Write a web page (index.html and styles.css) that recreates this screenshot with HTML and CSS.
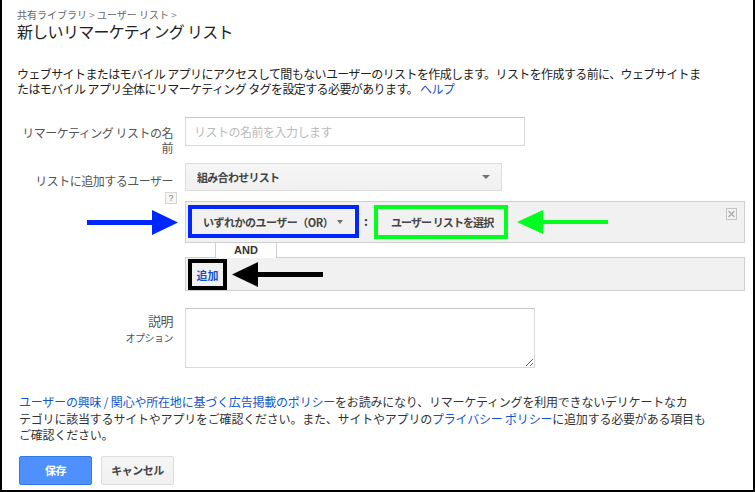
FILE: index.html
```html
<!DOCTYPE html>
<html lang="ja">
<head>
<meta charset="utf-8">
<title>新しいリマーケティング リスト</title>
<link rel="stylesheet" href="styles.css">
</head>
<body>
<div class="page">
  <div class="crumbs">共有ライブラリ <span class="sep">&gt;</span> ユーザー リスト <span class="sep">&gt;</span></div>
  <h1 class="title">新しいリマーケティング リスト</h1>
  <p class="intro">ウェブサイトまたはモバイル アプリにアクセスして間もないユーザーのリストを作成します。リストを作成する前に、ウェブサイトまたはモバイル アプリ全体にリマーケティング タグを設定する必要があります。 <a class="link" href="#">ヘルプ</a></p>

  <div class="form">
    <div class="row">
      <label class="lbl" for="name">リマーケティング リストの名前</label>
      <div class="field"><input id="name" class="text" type="text" placeholder="リストの名前を入力します"></div>
    </div>

    <div class="row">
      <div class="lbl lbl-select">リストに追加するユーザー<span class="help">?</span></div>
      <div class="field">
        <div class="select">組み合わせリスト<span class="caret"></span></div>
        <div class="combo">
          <div class="block first">
            <button class="chip mark-blue" type="button">いずれかのユーザー（OR）<span class="caret small"></span></button>
            <span class="colon">:</span>
            <button class="chip mark-green" type="button">ユーザー リストを選択</button>
            <span class="close">
              <svg width="11" height="12" viewBox="0 0 11 12"><rect x="0.5" y="0.5" width="10" height="11" fill="#f4f4f4" stroke="#c4c4c4"/><path d="M2.5 3 L8.5 9 M8.5 3 L2.5 9" stroke="#b0b0b0" stroke-width="1.6"/></svg>
            </span>
          </div>
          <div class="and">AND</div>
          <div class="block second"><a class="addlink mark-black" href="#">追加</a></div>
        </div>
      </div>
    </div>

    <div class="row">
      <div class="lbl lbl-desc"><div class="desc-main">説明</div><div class="opt">オプション</div></div>
      <div class="field"><textarea class="area"></textarea></div>
    </div>
  </div>

  <p class="policy"><a class="link" href="#">ユーザーの興味 / 関心や所在地に基づく広告掲載のポリシー</a>をお読みになり、リマーケティングを利用できないデリケートなカ<br>テゴリに該当するサイトやアプリをご確認ください。また、サイトやアプリの<a class="link" href="#">プライバシー ポリシー</a>に追加する必要がある項目もご確認ください。</p>

  <div class="actions">
    <button class="btn primary" type="button">保存</button>
    <button class="btn" type="button">キャンセル</button>
  </div>

  <svg class="arrow arrow-blue" width="92" height="27" viewBox="0 0 92 27"><rect x="0" y="10" width="66" height="5" fill="#0026ff"/><polygon points="65,0 91,12.5 65,25" fill="#0026ff"/></svg>
  <svg class="arrow arrow-green" width="92" height="26" viewBox="0 0 92 26"><polygon points="0,12 26,0 26,24" fill="#00ff21"/><rect x="25" y="10" width="66" height="4" fill="#00ff21"/></svg>
  <svg class="arrow arrow-black" width="92" height="26" viewBox="0 0 92 26"><polygon points="0,12.5 26,0 26,25" fill="#000"/><rect x="25" y="10" width="66" height="5" fill="#000"/></svg>
</div>
</body>
</html>
```

FILE: styles.css
```css
* { box-sizing: border-box; }
html, body { margin: 0; padding: 0; background: #fff; }
body {
  font-family: "Noto Sans CJK JP", "Liberation Sans", sans-serif;
  color: #222;
}
.page {
  position: relative;
  width: 755px;
  height: 492px;
  border-left: 2px solid #000;
  border-right: 2px solid #000;
  border-bottom: 2px solid #000;
  padding: 9px 8px 0 15px;
  overflow: hidden;
}
.crumbs {
  font-size: 10px;
  line-height: 12px;
  color: #666;
}
.crumbs .sep { color: #888; }
.title {
  margin: 0;
  font-size: 16px;
  line-height: 20px;
  font-weight: normal;
  letter-spacing: -0.7px;
  color: #222;
}
.intro {
  margin: 25px 0 0;
  width: 692px;
  font-size: 12px;
  line-height: 15px;
  letter-spacing: -0.6px;
  color: #222;
}
.link { color: #1155cc; text-decoration: none; }

.form {
  margin-top: 21px;
  display: grid;
  row-gap: 8px;
}
.row {
  display: grid;
  grid-template-columns: 156px 560px;
  column-gap: 12px;
  align-items: start;
}
.lbl {
  padding-top: 8px;
  text-align: right;
  font-size: 12px;
  line-height: 15px;
  letter-spacing: -0.5px;
  color: #555;
}
.lbl-select { padding-top: 10px; }
.help {
  display: block;
  width: 12px;
  height: 12px;
  margin: 4px -4px 0 auto;
  border: 1px solid #d6d6d6;
  background: #f6f6f6;
  color: #888;
  font-family: "Liberation Sans", sans-serif;
  font-size: 9px;
  line-height: 10px;
  letter-spacing: 0;
  text-align: center;
}
.text {
  display: block;
  width: 340px;
  height: 29px;
  margin: 0;
  padding: 0 8px;
  border: 1px solid #d9d9d9;
  border-top-color: #c6c6c6;
  font-family: inherit;
  font-size: 12px;
  letter-spacing: -0.5px;
  color: #222;
  outline: none;
}
.text::placeholder { color: #bbb; }

.select {
  display: flex;
  align-items: center;
  justify-content: space-between;
  width: 317px;
  height: 28px;
  padding: 0 8px 0 11px;
  border: 1px solid #dcdcdc;
  background: linear-gradient(#f6f6f6, #f0f0f0);
  font-size: 11px;
  font-weight: bold;
  letter-spacing: -0.7px;
  color: #444;
}
.caret {
  width: 0;
  height: 0;
  border-left: 4px solid transparent;
  border-right: 4px solid transparent;
  border-top: 4px solid #707070;
  margin-right: 3px;
}
.caret.small {
  border-left-width: 3.5px;
  border-right-width: 3.5px;
  margin: 0 0 0 4px;
}

.combo {
  margin-top: 10px;
  margin-bottom: 9px;
  display: flex;
  flex-direction: column;
}
.block {
  background: #f1f1f1;
  border: 1px solid #cfcfcf;
}
.block.first {
  position: relative;
  height: 42px;
  display: flex;
  align-items: flex-start;
  padding: 3px 0 0 2px;
}
.chip {
  display: flex;
  align-items: center;
  margin: 0;
  padding: 0 0 0 10px;
  background: #f1f1f1;
  font-family: inherit;
  font-size: 11px;
  font-weight: bold;
  letter-spacing: -0.5px;
  color: #444;
  cursor: pointer;
}
.mark-blue {
  width: 171px;
  height: 33px;
  border: 4px solid #0026ff;
  padding-left: 11px;
}
.colon {
  margin: 8px 0 0 5px;
  font-size: 12px;
  font-weight: bold;
  line-height: 16px;
  color: #333;
}
.mark-green {
  width: 134px;
  height: 34px;
  margin-left: 6px;
  border: 4px solid #00ff21;
  padding-left: 13px;
  letter-spacing: -0.9px;
}
.close {
  position: absolute;
  right: 7px;
  top: 6px;
  display: block;
  width: 11px;
  height: 12px;
}
.close svg { display: block; }
.and {
  align-self: flex-start;
  width: 62px;
  height: 15px;
  margin: 0 0 -1px 30px;
  position: relative;
  background: #fff;
  border-left: 1px solid #cfcfcf;
  border-right: 1px solid #cfcfcf;
  font-family: "Liberation Sans", sans-serif;
  font-size: 11px;
  font-weight: bold;
  line-height: 14px;
  text-align: center;
  color: #333;
}
.block.second {
  height: 34px;
  padding: 1px 0 0 2px;
}
.addlink {
  display: flex;
  align-items: center;
  justify-content: center;
  width: 39px;
  height: 31px;
  border: 4px solid #000;
  font-size: 11px;
  font-weight: bold;
  color: #1155cc;
  text-decoration: none;
}

.lbl-desc { padding-top: 5px; }
.desc-main {
  font-size: 13px;
  line-height: 16px;
  color: #555;
}
.opt {
  margin-top: 3px;
  font-size: 10px;
  line-height: 12px;
  color: #555;
}
.area {
  display: block;
  width: 350px;
  height: 60px;
  margin: 0;
  border: 1px solid #d9d9d9;
  border-top-color: #c6c6c6;
  resize: both;
  font-family: inherit;
}

.policy {
  margin: 26px 0 0;
  padding-left: 2px;
  width: 700px;
  font-size: 12px;
  line-height: 16.5px;
  letter-spacing: -0.2px;
  color: #333;
}
.actions {
  margin-top: 12px;
  padding-left: 2px;
  display: flex;
  gap: 9px;
}
.btn {
  width: 73px;
  height: 29px;
  margin: 0;
  padding: 0;
  border: 1px solid #dcdcdc;
  border-radius: 2px;
  background: linear-gradient(#f5f5f5, #f1f1f1);
  font-family: inherit;
  font-size: 11px;
  font-weight: bold;
  letter-spacing: -0.5px;
  color: #444;
}
.btn.primary {
  background: #4d90fe;
  border-color: #3079ed;
  color: #fff;
}

.arrow { position: absolute; display: block; }
.arrow-blue { left: 85px; top: 210px; }
.arrow-green { left: 515px; top: 210px; }
.arrow-black { left: 230px; top: 262px; }
```
